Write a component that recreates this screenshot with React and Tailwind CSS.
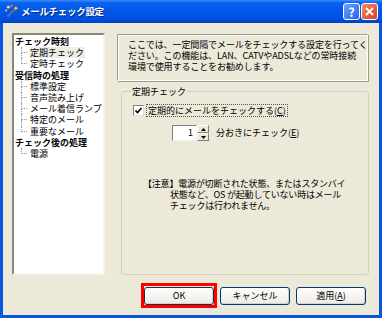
import React from "react";

const font = { fontFamily: '"Noto Sans CJK JP", "Noto Sans", sans-serif' };

const tree = [
  { label: "チェック時刻", bold: true },
  { label: "定期チェック", selected: true },
  { label: "定時チェック", last: true },
  { label: "受信時の処理", bold: true },
  { label: "標準設定" },
  { label: "音声読み上げ" },
  { label: "メール着信ランプ" },
  { label: "特定のメール" },
  { label: "重要なメール", last: true },
  { label: "チェック後の処理", bold: true },
  { label: "電源", last: true },
];

function TitleIcon() {
  return (
    <svg width="15" height="15" viewBox="0 0 14 14" className="shrink-0">
      <path d="M2 11 L9 4 L11 6 L4 13 Z" fill="#3a6fd8" stroke="#1c3f8f" strokeWidth="0.6" />
      <path d="M9 4 L11 2 L13 4 L11 6 Z" fill="#f0c040" stroke="#9a6a10" strokeWidth="0.6" />
      <circle cx="4" cy="3" r="1.3" fill="#ffe27a" />
      <circle cx="7" cy="1.6" r="0.9" fill="#ff9a3a" />
      <circle cx="2" cy="6" r="0.9" fill="#ffd24a" />
    </svg>
  );
}

function Btn({ children, def }) {
  return (
    <div
      className={`w-[70px] h-[18px] flex items-center justify-center rounded-[3px] border text-[9px] text-black bg-gradient-to-b from-white to-[#ecebe6] shadow-[inset_-1px_-1px_0_#d6d0c5] ${def ? "border-[#1f2d3f]" : "border-[#003c74]"}`}
    >
      {children}
    </div>
  );
}

export default function App() {
  return (
    <div style={font} className="w-[382px] h-[318px] flex flex-col bg-[#0a55e2] overflow-hidden select-none">
      {/* title bar */}
      <div className="h-[23px] shrink-0 flex items-center pl-[4px] pr-[4px] bg-[linear-gradient(to_bottom,#3d8cff_0%,#0a62f0_12%,#0058ea_45%,#0052e0_80%,#0041c8_100%)]">
        <TitleIcon />
        <span className="ml-[2px] text-white font-bold text-[9.5px] tracking-[-0.3px] [text-shadow:1px_1px_0_#0a2a7a]">メールチェック設定</span>
        <div className="ml-auto flex gap-[1px]">
          <div className="w-[17px] h-[17px] rounded-[3px] border border-white bg-[linear-gradient(135deg,#6aa0ff,#2a62e8)] flex items-center justify-center text-white font-bold text-[12px] leading-none">?</div>
          <div className="w-[17px] h-[17px] rounded-[3px] border border-white bg-[linear-gradient(135deg,#f08a6a,#d8401c)] flex items-center justify-center">
            <svg width="9" height="9" viewBox="0 0 9 9">
              <path d="M1 1 L8 8 M8 1 L1 8" stroke="white" strokeWidth="1.8" />
            </svg>
          </div>
        </div>
      </div>

      {/* body */}
      <div className="flex-1 mx-[3px] mb-[3px] bg-[#ece9d8] pl-[9px] pt-[10px] pr-[10px] flex flex-col">
        <div className="flex gap-[12px]">
          {/* tree */}
          <div className="w-[93px] h-[242px] bg-white border-2 border-t-[#8a877a] border-l-[#8a877a] border-r-[#f4f3ee] border-b-[#f4f3ee] pt-[1px] pl-[1px] text-[9px] text-black">
            {tree.map((it, i) =>
              it.bold ? (
                <div key={i} className="h-[11.2px] leading-[11.2px] font-bold whitespace-nowrap">{it.label}</div>
              ) : (
                <div key={i} className="h-[11.2px] flex whitespace-nowrap">
                  <div className="w-[14px] shrink-0 flex flex-col pl-[6px]">
                    <div className="h-[6px] w-[6px] border-l border-b border-dotted border-[#9a9a9a]" />
                    {!it.last && <div className="flex-1 border-l border-dotted border-[#9a9a9a]" />}
                  </div>
                  <span className={`leading-[11.2px] px-[1px] ${it.selected ? "bg-[#efeee6]" : ""}`}>{it.label}</span>
                </div>
              )
            )}
          </div>

          {/* right column */}
          <div className="w-[252px] flex flex-col">
            <div className="mt-[1px] w-[251px] h-[47px] border border-t-[#9d9b90] border-l-[#9d9b90] border-r-white border-b-white shadow-[inset_1px_1px_0_#fff,1px_1px_0_#9d9b90] pl-[10px] pt-[4px] text-[9px] leading-[11px] text-black whitespace-nowrap tracking-[-0.1px]">
              ここでは、一定間隔でメールをチェックする設定を行ってく<br />
              ださい。この機能は、LAN、CATVやADSLなどの常時接続<br />
              環境で使用することをお勧めします。
            </div>

            <fieldset className="mt-[5px] ml-[4px] w-[248px] h-[189px] border border-[#d0d0bf] rounded-[3px] px-[11px] text-[9px] text-black">
              <legend className="ml-[-2px] px-[1px] leading-[11px]">定期チェック</legend>
              <div className="mt-[7px] flex items-center h-[13px]">
                <div className="w-[11px] h-[11px] bg-white border border-t-[#808080] border-l-[#808080] border-r-[#e0ded4] border-b-[#e0ded4] flex items-center justify-center">
                  <svg width="7" height="7" viewBox="0 0 7 7">
                    <path d="M0.5 3.5 L2.5 5.5 L6.5 1" fill="none" stroke="#000" strokeWidth="1.6" />
                  </svg>
                </div>
                <span className="ml-[2px] px-[1px] border border-dotted border-[#555] leading-[11px] whitespace-nowrap">
                  定期的にメールをチェックする(<u>C</u>)
                </span>
              </div>

              <div className="mt-[8px] ml-[39px] flex items-center">
                <div className="w-[25px] h-[16px] bg-white border border-t-[#808080] border-l-[#808080] border-r-[#f0efe8] border-b-[#f0efe8] flex items-center justify-end pr-[3px] text-[9px]">1</div>
                <div className="w-[12px] h-[16px] flex flex-col">
                  <div className="flex-1 bg-[#ece9d8] border border-t-white border-l-white border-r-[#808080] border-b-[#808080] flex items-center justify-center">
                    <svg width="5" height="3" viewBox="0 0 5 3"><path d="M0 3 L2.5 0 L5 3 Z" fill="#000" /></svg>
                  </div>
                  <div className="flex-1 bg-[#ece9d8] border border-t-white border-l-white border-r-[#808080] border-b-[#808080] flex items-center justify-center">
                    <svg width="5" height="3" viewBox="0 0 5 3"><path d="M0 0 L2.5 3 L5 0 Z" fill="#000" /></svg>
                  </div>
                </div>
                <span className="ml-[7px] whitespace-nowrap">分おきにチェック(<u>E</u>)</span>
              </div>

              <div className="mt-[37px] ml-[10px] leading-[11px] whitespace-nowrap tracking-[-0.2px]">
                <div>【注意】電源が切断された状態、またはスタンバイ</div>
                <div className="pl-[27px]">状態など、OS が起動していない時はメール</div>
                <div className="pl-[27px]">チェックは行われません。</div>
              </div>
            </fieldset>
          </div>
        </div>

        {/* buttons */}
        <div className="mt-[12px] flex justify-end gap-[6px] pr-[3px]">
          <div className="relative">
            <Btn def>OK</Btn>
            <div className="absolute -inset-x-[3px] -top-[4px] -bottom-[3px] border-[3px] border-[#ff0000] pointer-events-none" />
          </div>
          <Btn>キャンセル</Btn>
          <Btn>適用(<u>A</u>)</Btn>
        </div>
      </div>
    </div>
  );
}
